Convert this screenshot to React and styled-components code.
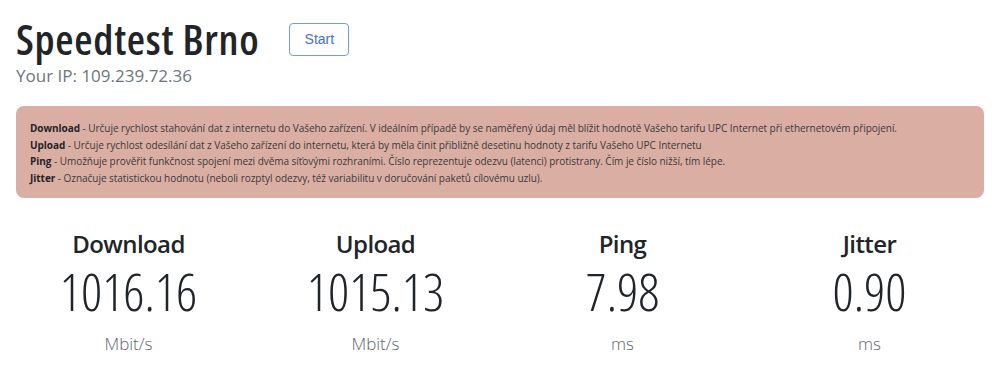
import styled, { createGlobalStyle } from "styled-components";

const GlobalStyle = createGlobalStyle`
  body {
    margin: 0;
    background: #ffffff;
    font-family: "Open Sans", "Noto Sans", sans-serif;
    color: #212529;
  }
`;

const Page = styled.div`
  width: 1000px;
  padding-top: 16px;
`;

const Header = styled.div`
  display: flex;
  align-items: center;
  gap: 30px;
  margin: 0 16px;
`;

const Title = styled.h1`
  margin: 0;
  font-size: 42px;
  font-weight: 600;
  font-stretch: 75%;
  letter-spacing: 0.7px;
  line-height: 46px;
`;

const StartButton = styled.button`
  width: 60px;
  height: 33px;
  background: #fff;
  border: 1px solid #6f9ee8;
  border-radius: 4px;
  color: #3d72d9;
  font-family: "Liberation Sans", Arial, sans-serif;
  font-size: 14px;
  cursor: pointer;
`;

const Ip = styled.div`
  margin: 2px 16px 0;
  font-size: 17px;
  color: #6c757d;
  line-height: 24px;
`;

const Alert = styled.div`
  margin: 18px 16px 0;
  padding: 14px 14px 11px;
  background: #dbaea3;
  border-radius: 8px;
  font-size: 10px;
  line-height: 16.7px;
  letter-spacing: -0.04px;
  color: #3a3a3a;
`;

const Line = styled.div`
  white-space: nowrap;
  b {
    color: #212529;
    font-weight: 700;
  }
`;

const Stats = styled.div`
  display: grid;
  grid-template-columns: repeat(4, 1fr);
  padding: 0 7px 0 5px;
  margin-top: 31px;
`;

const Stat = styled.div`
  display: flex;
  flex-direction: column;
  align-items: center;
`;

const Label = styled.div`
  font-size: 24px;
  font-weight: 600;
  font-stretch: 88%;
  letter-spacing: -0.6px;
  line-height: 30px;
  color: #212529;
`;

const Value = styled.div`
  margin-top: 2px;
  font-size: 52px;
  font-weight: 300;
  font-stretch: 75%;
  line-height: 60px;
  color: #212529;
`;

const Unit = styled.div`
  margin-top: 11px;
  font-size: 17px;
  font-weight: 300;
  font-stretch: 92%;
  line-height: 24px;
  color: #5f666d;
`;

const stats = [
  { label: "Download", value: "1016.16", unit: "Mbit/s" },
  { label: "Upload", value: "1015.13", unit: "Mbit/s" },
  { label: "Ping", value: "7.98", unit: "ms" },
  { label: "Jitter", value: "0.90", unit: "ms" },
];

export default function App() {
  return (
    <Page>
      <GlobalStyle />
      <Header>
        <Title>Speedtest Brno</Title>
        <StartButton>Start</StartButton>
      </Header>
      <Ip>Your IP: 109.239.72.36</Ip>
      <Alert>
        <Line>
          <b>Download</b> - Určuje rychlost stahování dat z internetu do Vašeho zařízení. V ideálním případě by se naměřený údaj měl blížit hodnotě Vašeho tarifu UPC Internet při ethernetovém připojení.
        </Line>
        <Line>
          <b>Upload</b> - Určuje rychlost odesílání dat z Vašeho zařízení do internetu, která by měla činit přibližně desetinu hodnoty z tarifu Vašeho UPC Internetu
        </Line>
        <Line>
          <b>Ping</b> - Umožňuje prověřit funkčnost spojení mezi dvěma síťovými rozhraními. Číslo reprezentuje odezvu (latenci) protistrany. Čím je číslo nižší, tím lépe.
        </Line>
        <Line>
          <b>Jitter</b> - Označuje statistickou hodnotu (neboli rozptyl odezvy, též variabilitu v doručování paketů cílovému uzlu).
        </Line>
      </Alert>
      <Stats>
        {stats.map((s) => (
          <Stat key={s.label}>
            <Label>{s.label}</Label>
            <Value>{s.value}</Value>
            <Unit>{s.unit}</Unit>
          </Stat>
        ))}
      </Stats>
    </Page>
  );
}
